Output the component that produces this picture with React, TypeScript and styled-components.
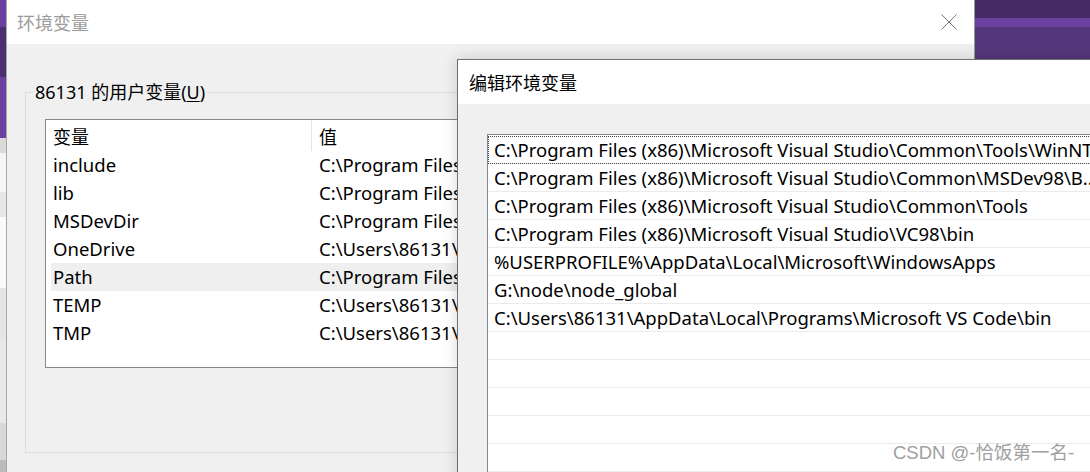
import * as React from 'react';
import styled, { createGlobalStyle } from 'styled-components';

const GlobalStyle = createGlobalStyle`
  html, body {
    margin: 0;
    padding: 0;
  }
  body {
    width: 1090px;
    height: 472px;
    overflow: hidden;
    font-family: "Noto Sans", "Noto Sans CJK SC", sans-serif;
    color: #000;
  }
`;

const userVars = [
  { name: 'include', value: 'C:\\Program Files (x86)\\Microsoft Visual Studio\\VC98\\atl\\include' },
  { name: 'lib', value: 'C:\\Program Files (x86)\\Microsoft Visual Studio\\VC98\\mfc\\lib' },
  { name: 'MSDevDir', value: 'C:\\Program Files (x86)\\Microsoft Visual Studio\\Common\\MSDev98' },
  { name: 'OneDrive', value: 'C:\\Users\\86131\\OneDrive' },
  { name: 'Path', value: 'C:\\Program Files (x86)\\Microsoft Visual Studio\\Common\\Tools\\WinNT;' },
  { name: 'TEMP', value: 'C:\\Users\\86131\\AppData\\Local\\Temp' },
  { name: 'TMP', value: 'C:\\Users\\86131\\AppData\\Local\\Temp' },
];

const pathEntries = [
  'C:\\Program Files (x86)\\Microsoft Visual Studio\\Common\\Tools\\WinNT',
  'C:\\Program Files (x86)\\Microsoft Visual Studio\\Common\\MSDev98\\B...',
  'C:\\Program Files (x86)\\Microsoft Visual Studio\\Common\\Tools',
  'C:\\Program Files (x86)\\Microsoft Visual Studio\\VC98\\bin',
  '%USERPROFILE%\\AppData\\Local\\Microsoft\\WindowsApps',
  'G:\\node\\node_global',
  'C:\\Users\\86131\\AppData\\Local\\Programs\\Microsoft VS Code\\bin',
  '', '', '', '', '', '',
];

const Desktop = styled.div`
  position: relative;
  width: 1090px;
  height: 472px;
  overflow: hidden;
  background: linear-gradient(
    to bottom,
    #462a64 0 18px,
    #6c41a0 18px 27px,
    #54377a 27px 60px,
    #54377a 60px
  );
`;

// bits of the window lying behind, on the left edge
const BackStrip = styled.div`
  position: absolute;
  left: 0;
  top: 0;
  width: 6px;
  height: 100%;
  background: linear-gradient(
    to bottom,
    #6b40a2 0 27px,
    #4b3070 27px 77px,
    #6b40a2 77px 138px,
    #dadada 138px 153px,
    #f5f5f5 153px 192px,
    #e6e6e6 192px 217px,
    #fafafa 217px 288px,
    #e4e4e4 288px 340px,
    #e8e8e8 340px 423px,
    #d8d8d8 423px 460px,
    #bbbbbb 460px
  );
`;

const Window = styled.div<{ $left: number; $top: number; $width: number }>`
  position: absolute;
  left: ${(p) => p.$left}px;
  top: ${(p) => p.$top}px;
  width: ${(p) => p.$width}px;
  height: 520px;
  display: flex;
  flex-direction: column;
  background: #f0f0f0;
  box-sizing: border-box;
`;

const MainWindow = styled(Window)`
  border-left: 1px solid #a8a8a8;
  border-right: 1px solid #9a9a9a;
`;

const EditWindow = styled(Window)`
  border-left: 1px solid #6f6f6f;
  border-top: 1px solid #6f6f6f;
  box-shadow: 0 0 14px rgba(0, 0, 0, 0.16);
`;

const TitleBar = styled.div<{ $indent: number }>`
  height: 44px;
  flex: none;
  display: flex;
  align-items: center;
  background: #fff;
  padding-left: ${(p) => p.$indent}px;
`;

const TitleText = styled.span<{ $inactive?: boolean }>`
  flex: 1;
  font-family: "Noto Sans CJK SC", sans-serif;
  font-size: 18px;
  line-height: 24px;
  color: ${(p) => (p.$inactive ? '#9b9b9b' : '#000')};
`;

const CloseButton = styled.div`
  width: 46px;
  height: 44px;
  margin-right: 2px;
  display: flex;
  align-items: center;
  justify-content: center;
`;

const MainBody = styled.div`
  padding: 0 18px;
`;

const GroupBox = styled.div<{ $gap: number }>`
  margin-top: ${(p) => p.$gap}px;
  border: 1px solid #dcdcdc;
  padding: 0 19px 84px 19px;
`;

const GroupLabel = styled.div<{ $indent: number }>`
  width: fit-content;
  margin: -13px 0 0 ${(p) => p.$indent - 19}px;
  padding: 0 2px;
  height: 24px;
  line-height: 24px;
  background: #f0f0f0;
  font-size: 18px;
  white-space: nowrap;
  u {
    text-decoration-thickness: 1px;
    text-underline-offset: 2px;
  }
`;

const ListView = styled.div`
  margin-top: 15px;
  height: 249px;
  box-sizing: border-box;
  border: 1px solid #828790;
  background: #fff;
  overflow: hidden;
`;

const HeaderRow = styled.div`
  display: grid;
  grid-template-columns: 261px 1fr;
  height: 31px;
  margin-left: 5px;
  align-items: center;
  font-size: 18px;
`;

const HeaderCell = styled.div<{ $first?: boolean }>`
  height: 100%;
  display: flex;
  align-items: center;
  padding-left: ${(p) => (p.$first ? 2 : 7)}px;
  border-right: ${(p) => (p.$first ? '1px solid #e5e5e5' : 'none')};
  font-family: "Noto Sans CJK SC", sans-serif;
`;

const VarRow = styled.div<{ $selected?: boolean }>`
  display: grid;
  grid-template-columns: 266px 1fr;
  height: 28px;
  margin-left: 5px;
  align-items: center;
  background: ${(p) => (p.$selected ? '#efefef' : 'transparent')};
  font-size: 18.5px;
  line-height: 26px;
  white-space: nowrap;
`;

const Cell = styled.span`
  padding-left: 2px;
  overflow: hidden;
`;

const EditBody = styled.div`
  flex: 1;
  padding: 30px 0 0 29px;
`;

const PathList = styled.div`
  height: 400px;
  padding-top: 1px;
  border: 1px solid #828790;
  border-right: none;
  background: #fff;
  overflow: hidden;
`;

const PathRow = styled.div<{ $focused?: boolean }>`
  height: 28px;
  box-sizing: border-box;
  display: flex;
  align-items: center;
  padding-left: 6px;
  border-bottom: 1px solid #ebebeb;
  font-size: 18.5px;
  white-space: nowrap;
  outline: ${(p) => (p.$focused ? '1px dotted #444' : 'none')};
  outline-offset: -1px;
`;

const Watermark = styled.div`
  position: absolute;
  left: 893px;
  top: 440px;
  font-family: "Liberation Sans", "Noto Sans CJK SC", sans-serif;
  font-size: 18.5px;
  line-height: 26px;
  color: #a0a0a0;
  white-space: nowrap;
`;

const CloseIcon = () => (
  <svg width="16" height="16" viewBox="0 0 16 16">
    <path d="M0.5 0.5 L15.5 15.5 M15.5 0.5 L0.5 15.5" stroke="#767676" strokeWidth="1" fill="none" />
  </svg>
);

export default function App() {
  return (
    <Desktop>
      <GlobalStyle />
      <BackStrip />

      <MainWindow $left={6} $top={0} $width={969}>
        <TitleBar $indent={10}>
          <TitleText $inactive>环境变量</TitleText>
          <CloseButton>
            <CloseIcon />
          </CloseButton>
        </TitleBar>
        <MainBody>
          <GroupBox $gap={48}>
            <GroupLabel $indent={7}>
              86131 的用户变量(<u>U</u>)
            </GroupLabel>
            <ListView>
              <HeaderRow>
                <HeaderCell $first>变量</HeaderCell>
                <HeaderCell>值</HeaderCell>
              </HeaderRow>
              {userVars.map((v) => (
                <VarRow key={v.name} $selected={v.name === 'Path'}>
                  <Cell>{v.name}</Cell>
                  <Cell>{v.value}</Cell>
                </VarRow>
              ))}
            </ListView>
          </GroupBox>
          <GroupBox $gap={31}>
            <GroupLabel $indent={14}>
              系统变量(<u>S</u>)
            </GroupLabel>
          </GroupBox>
        </MainBody>
      </MainWindow>

      <EditWindow $left={457} $top={59} $width={700}>
        <TitleBar $indent={11}>
          <TitleText>编辑环境变量</TitleText>
        </TitleBar>
        <EditBody>
          <PathList>
            {pathEntries.map((p, i) => (
              <PathRow key={i} $focused={i === 0}>
                {p}
              </PathRow>
            ))}
          </PathList>
        </EditBody>
      </EditWindow>

      <Watermark>CSDN @-恰饭第一名-</Watermark>
    </Desktop>
  );
}
